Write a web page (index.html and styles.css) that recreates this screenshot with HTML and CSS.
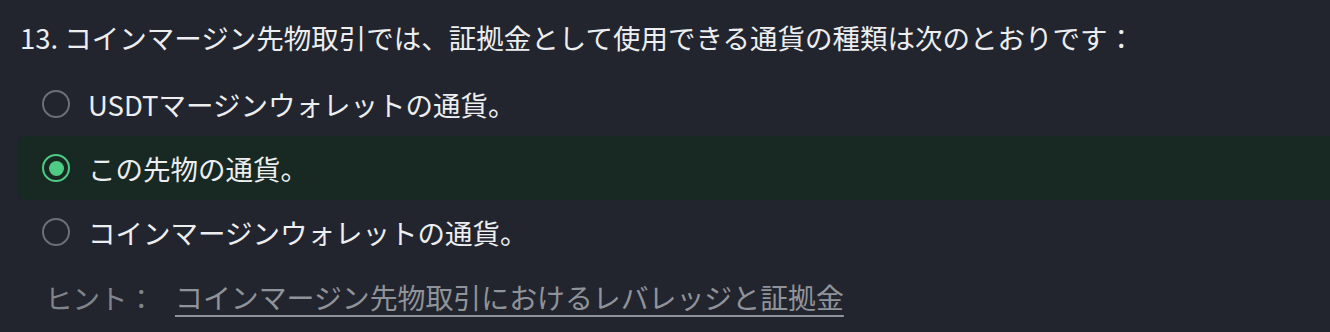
FILE: index.html
```html
<!DOCTYPE html>
<html lang="ja">
<head>
  <meta charset="UTF-8">
  <meta name="viewport" content="width=device-width, initial-scale=1.0">
  <title>Quiz</title>
  <link rel="stylesheet" href="styles.css">
</head>
<body>
  <div class="question">
    <p class="title">13. コインマージン先物取引では、証拠金として使用できる通貨の種類は次のとおりです：</p>
    <div class="options">
      <label class="option">
        <span class="radio"></span>
        <span class="optText">USDTマージンウォレットの通貨。</span>
      </label>
      <label class="option selected">
        <span class="radio"></span>
        <span class="optText">この先物の通貨。</span>
      </label>
      <label class="option">
        <span class="radio"></span>
        <span class="optText">コインマージンウォレットの通貨。</span>
      </label>
    </div>
    <div class="hint">
      <span class="hintLabel">ヒント：</span>
      <a class="hintLink" href="#">コインマージン先物取引におけるレバレッジと証拠金</a>
    </div>
  </div>
</body>
</html>
```

FILE: styles.css
```css
body{
  margin: 0;
  background-color: #23252e;
  font-family: "Noto Sans CJK JP", "Noto Sans", sans-serif;
  color: #eaebee;
}
.question{
  padding: 17px 0 0 20px;
}
.title{
  margin: 0;
  font-size: 27.5px;
  line-height: 40px;
  color: #eceef0;
}
.options{
  margin: 15px 0 0 -2px;
  display: flex;
  flex-direction: column;
}
.option{
  display: flex;
  align-items: center;
  height: 64px;
  padding-left: 24px;
  border-radius: 7px;
  cursor: pointer;
}
.option.selected{
  background-color: #182822;
  border-radius: 7px 0 0 7px;
}
.radio{
  box-sizing: border-box;
  width: 28px;
  height: 28px;
  border: 2px solid #6c6f77;
  border-radius: 50%;
  margin-right: 18px;
  flex-shrink: 0;
  display: flex;
  align-items: center;
  justify-content: center;
}
.selected .radio{
  border: 2.5px solid #4ecb84;
}
.selected .radio::after{
  content: "";
  width: 15px;
  height: 15px;
  border-radius: 50%;
  background-color: #4ecb84;
}
.optText{
  font-size: 27.5px;
  line-height: 40px;
  color: #eceef0;
}
.hint{
  margin: 13px 0 0 25px;
  display: flex;
  align-items: center;
  font-size: 27.5px;
  line-height: 40px;
}
.hintLabel{
  color: #80848b;
  margin-right: 20px;
}
.hintLink{
  font-size: 27.9px;
  color: #8f939a;
  text-decoration: underline;
  text-underline-offset: 6px;
  text-decoration-thickness: 2px;
}
```
